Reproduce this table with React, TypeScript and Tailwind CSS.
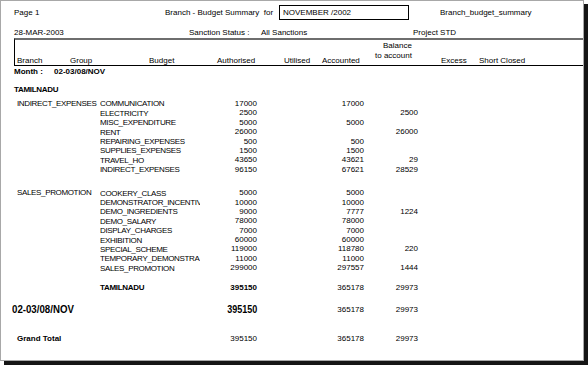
import React from 'react'

type Line = { name: string; auth: string; acc?: string; bal?: string }

const INDIRECT: Line[] = [
  { name: 'COMMUNICATION', auth: '17000', acc: '17000' },
  { name: 'ELECTRICITY', auth: '2500', bal: '2500' },
  { name: 'MISC_EXPENDITURE', auth: '5000', acc: '5000' },
  { name: 'RENT', auth: '26000', bal: '26000' },
  { name: 'REPAIRING_EXPENSES', auth: '500', acc: '500' },
  { name: 'SUPPLIES_EXPENSES', auth: '1500', acc: '1500' },
  { name: 'TRAVEL_HO', auth: '43650', acc: '43621', bal: '29' },
  { name: 'INDIRECT_EXPENSES', auth: '96150', acc: '67621', bal: '28529' },
]

const SALES: Line[] = [
  { name: 'COOKERY_CLASS', auth: '5000', acc: '5000' },
  { name: 'DEMONSTRATOR_INCENTIV', auth: '10000', acc: '10000' },
  { name: 'DEMO_INGREDIENTS', auth: '9000', acc: '7777', bal: '1224' },
  { name: 'DEMO_SALARY', auth: '78000', acc: '78000' },
  { name: 'DISPLAY_CHARGES', auth: '7000', acc: '7000' },
  { name: 'EXHIBITION', auth: '60000', acc: '60000' },
  { name: 'SPECIAL_SCHEME', auth: '119000', acc: '118780', bal: '220' },
  { name: 'TEMPORARY_DEMONSTRA', auth: '11000', acc: '11000' },
  { name: 'SALES_PROMOTION', auth: '299000', acc: '297557', bal: '1444' },
]

const Row = ({ group, line }: { group?: string; line: Line }) => (
  <div className="flex h-[9.4px] items-center pl-[16px] whitespace-nowrap">
    <div className="w-[83px] tracking-[-0.35px]">{group}</div>
    <div className="w-[100px] overflow-hidden tracking-[-0.35px] leading-[9px]">{line.name}</div>
    <div className="w-[57px] text-right">{line.auth}</div>
    <div className="w-[107px] text-right">{line.acc}</div>
    <div className="w-[54px] text-right">{line.bal}</div>
  </div>
)

const Group = ({ name, lines }: { name: string; lines: Line[] }) => (
  <div className="flex flex-col">
    {lines.map((l, i) => (
      <Row key={l.name} group={i === 0 ? name : undefined} line={l} />
    ))}
  </div>
)

export default function App() {
  return (
    <div className="w-[588px] h-[365px] bg-white font-['Liberation_Sans',Arial,sans-serif] text-black text-[8px] leading-none">
      <div className="w-[584px] h-[361px] border border-[#a8a8a8] shadow-[4px_4px_0_0_#151515] flex flex-col overflow-hidden">
        {/* title row */}
        <div className="mt-[4px] h-[15px] flex items-center whitespace-nowrap">
          <div className="w-[164px] pl-[13px]">Page 1</div>
          <div className="w-[114px]">Branch - Budget Summary&nbsp;&nbsp;for</div>
          <div className="w-[130px] h-[15px] border border-black pl-[3px] flex items-center">NOVEMBER /2002</div>
          <div className="ml-[31px]">Branch_budget_summary</div>
        </div>

        <div className="mt-[8px] h-[9px] flex items-center whitespace-nowrap">
          <div className="w-[188px] pl-[13px]">28-MAR-2003</div>
          <div className="w-[72px]">Sanction Status :</div>
          <div className="w-[152px]">All Sanctions</div>
          <div>Project STD</div>
        </div>

        {/* column headers */}
        <div className="mt-[1px] ml-[13px] h-[28px] border-t-2 border-t-[#6e6e6e] border-l border-l-black border-b border-b-black flex items-end whitespace-nowrap">
          <div className="w-[55px] pl-[2px]">Branch</div>
          <div className="w-[79px]">Group</div>
          <div className="w-[68px]">Budget</div>
          <div className="w-[67px]">Authorised</div>
          <div className="w-[38px]">Utilised</div>
          <div className="w-[53px]">Accounted</div>
          <div className="w-[66px] flex flex-col gap-[2px] pb-[5px]">
            <span className="pl-[8px]">Balance</span>
            <span>to account</span>
          </div>
          <div className="w-[38px]">Excess</div>
          <div>Short Closed</div>
        </div>

        <div className="mt-[2px] h-[8px] flex font-bold">
          <div className="w-[53px] pl-[13px]">Month :</div>
          <div>02-03/08/NOV</div>
        </div>

        <div className="mt-[10px] h-[8px] pl-[13px] font-bold tracking-[-0.3px]">TAMILNADU</div>

        <div className="mt-[5.3px]">
          <Group name="INDIRECT_EXPENSES" lines={INDIRECT} />
        </div>
        <div className="mt-[14px]">
          <Group name="SALES_PROMOTION" lines={SALES} />
        </div>

        <div className="mt-[10.4px] flex h-[9.4px] items-center pl-[16px] whitespace-nowrap">
          <div className="w-[83px]" />
          <div className="w-[100px] font-bold tracking-[-0.3px]">TAMILNADU</div>
          <div className="w-[57px] text-right font-bold">395150</div>
          <div className="w-[107px] text-right">365178</div>
          <div className="w-[54px] text-right">29973</div>
        </div>

        <div className="mt-[11px] flex h-[12px] items-center whitespace-nowrap">
          <div className="w-[199px] pl-[11px]">
            <span className="inline-block origin-left scale-x-[0.88] text-[11px] font-bold">02-03/08/NOV</span>
          </div>
          <div className="w-[57px] text-right">
            <span className="inline-block origin-right scale-x-[0.9] text-[10px] font-bold">395150</span>
          </div>
          <div className="w-[107px] text-right">365178</div>
          <div className="w-[54px] text-right">29973</div>
        </div>

        <div className="mt-[18.3px] flex h-[9.4px] items-center whitespace-nowrap">
          <div className="w-[199px] pl-[16px] font-bold">Grand Total</div>
          <div className="w-[57px] text-right">395150</div>
          <div className="w-[107px] text-right">365178</div>
          <div className="w-[54px] text-right">29973</div>
        </div>
      </div>
    </div>
  )
}
